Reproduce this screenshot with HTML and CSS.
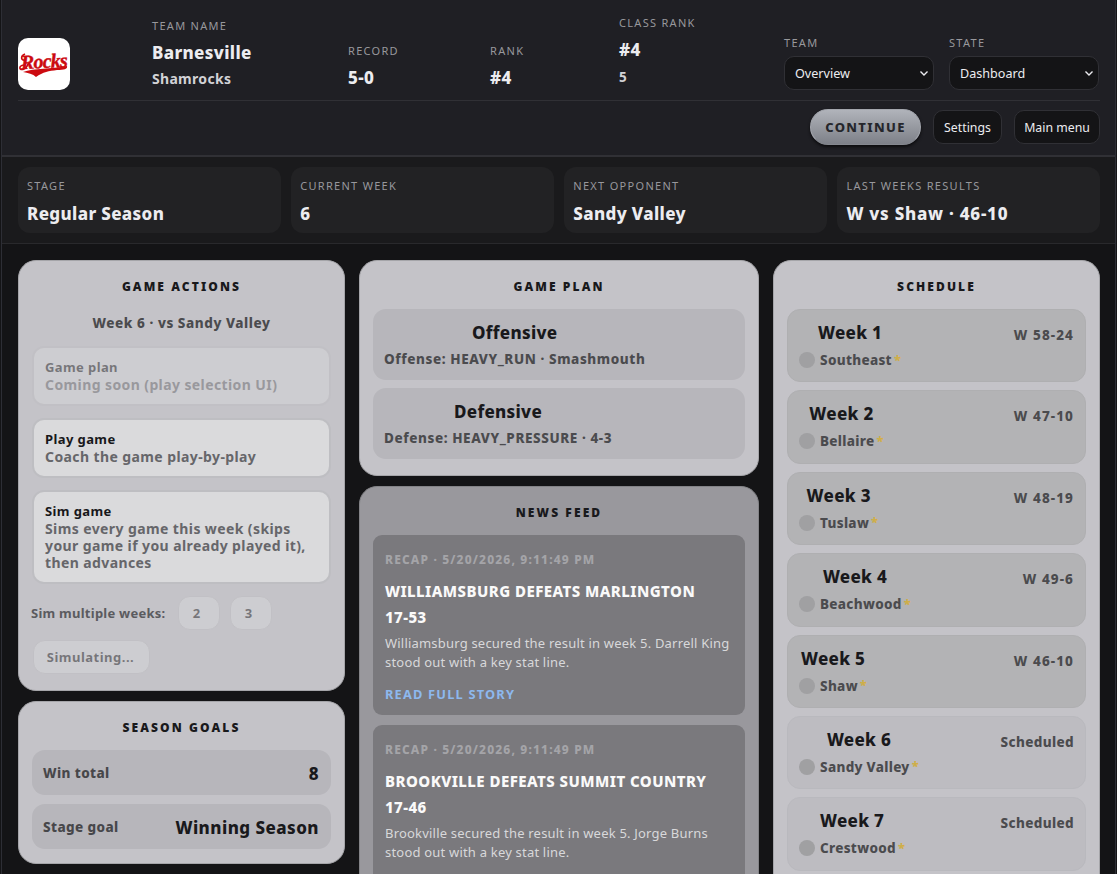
FILE: index.html
```
<!DOCTYPE html>
<html lang="en">
<head>
    <meta charset="UTF-8">
    <meta name="viewport" content="width=device-width, initial-scale=1.0">
    <title>Barnesville Shamrocks - Dashboard</title>
    <link rel="stylesheet" href="styles.css">
</head>
<body>
<div class="app">
    <header class="topbar">
        <div class="topbar-main">
            <div class="logo">
                <svg viewBox="0 0 52 52" width="52" height="52" role="img" aria-label="Rocks">
                    <text class="logo-text" x="3" y="30" transform="rotate(-3 26 26)">Rocks</text>
                    <path d="M5 34 C16 30 33 31 49 28 C50 31 46 32 39 32 C31 33 25 34 18 39 C15 36 10 35 5 34 Z" fill="#cc0a10"/>
                    <path d="M7 16 C2 18 3 23 7 22 M6 27 C0 28 1 33 6 31 C9 30 9 28 10 26" fill="none" stroke="#cc0a10" stroke-width="1.6"/>
                </svg>
            </div>
            <div class="stat">
                <div class="label">TEAM NAME</div>
                <div class="value">Barnesville</div>
                <div class="subvalue">Shamrocks</div>
            </div>
            <div class="stat">
                <div class="label">RECORD</div>
                <div class="value">5-0</div>
            </div>
            <div class="stat">
                <div class="label">RANK</div>
                <div class="value">#4</div>
            </div>
            <div class="stat stat-class">
                <div class="label">CLASS RANK</div>
                <div class="value">#4</div>
                <div class="subvalue">5</div>
            </div>
            <label class="picker">
                <span class="label">TEAM</span>
                <select><option>Overview</option></select>
            </label>
            <label class="picker">
                <span class="label">STATE</span>
                <select><option>Dashboard</option></select>
            </label>
        </div>
        <div class="topbar-actions">
            <button class="btn-continue">CONTINUE</button>
            <button class="btn-dark">Settings</button>
            <button class="btn-dark btn-menu">Main menu</button>
        </div>
    </header>

    <section class="summary">
        <div class="summary-card"><div class="label">STAGE</div><div class="value">Regular Season</div></div>
        <div class="summary-card"><div class="label">CURRENT WEEK</div><div class="value">6</div></div>
        <div class="summary-card"><div class="label">NEXT OPPONENT</div><div class="value">Sandy Valley</div></div>
        <div class="summary-card"><div class="label">LAST WEEKS RESULTS</div><div class="value value-score">W vs Shaw · 46-10</div></div>
    </section>

    <main class="board">
        <div class="column">
            <section class="card actions">
                <h2>GAME ACTIONS</h2>
                <p class="matchup">Week 6 · vs Sandy Valley</p>
                <button class="action" disabled><strong>Game plan</strong><span>Coming soon (play selection UI)</span></button>
                <button class="action"><strong>Play game</strong><span>Coach the game play-by-play</span></button>
                <button class="action"><strong>Sim game</strong><span>Sims every game this week (skips your game if you already played it), then advances</span></button>
                <div class="sim-row">
                    <span class="sim-label">Sim multiple weeks:</span>
                    <button class="pill" disabled>2</button>
                    <button class="pill" disabled>3</button>
                </div>
                <button class="pill pill-wide" disabled>Simulating...</button>
            </section>
            <section class="card goals">
                <h2>SEASON GOALS</h2>
                <div class="goal"><span>Win total</span><strong>8</strong></div>
                <div class="goal"><span>Stage goal</span><strong>Winning Season</strong></div>
            </section>
        </div>

        <div class="column">
            <section class="card plans">
                <h2>GAME PLAN</h2>
                <div class="plan">
                    <div class="plan-text"><h3>Offensive</h3><p>Offense: HEAVY_RUN · Smashmouth</p></div>
                </div>
                <div class="plan">
                    <div class="plan-text"><h3>Defensive</h3><p>Defense: HEAVY_PRESSURE · 4-3</p></div>
                </div>
            </section>
            <section class="card news">
                <h2>NEWS FEED</h2>
                <article class="story">
                    <div class="story-meta">RECAP · 5/20/2026, 9:11:49 PM</div>
                    <h3>WILLIAMSBURG DEFEATS MARLINGTON <span class="score">17-53</span></h3>
                    <p>Williamsburg secured the result in week 5. Darrell King stood out with a key stat line.</p>
                    <a class="story-link">READ FULL STORY</a>
                </article>
                <article class="story">
                    <div class="story-meta">RECAP · 5/20/2026, 9:11:49 PM</div>
                    <h3>BROOKVILLE DEFEATS SUMMIT COUNTRY <span class="score">17-46</span></h3>
                    <p>Brookville secured the result in week 5. Jorge Burns stood out with a key stat line.</p>
                </article>
            </section>
        </div>

        <div class="column">
            <section class="card schedule">
                <h2>SCHEDULE</h2>
                <div class="game played">
                    <div class="game-info"><h3>Week 1</h3><p><i class="dot"></i>Southeast<sup>*</sup></p></div>
                    <span class="result">W 58-24</span>
                </div>
                <div class="game played">
                    <div class="game-info"><h3>Week 2</h3><p><i class="dot"></i>Bellaire<sup>*</sup></p></div>
                    <span class="result">W 47-10</span>
                </div>
                <div class="game played">
                    <div class="game-info"><h3>Week 3</h3><p><i class="dot"></i>Tuslaw<sup>*</sup></p></div>
                    <span class="result">W 48-19</span>
                </div>
                <div class="game played">
                    <div class="game-info"><h3>Week 4</h3><p><i class="dot"></i>Beachwood<sup>*</sup></p></div>
                    <span class="result">W 49-6</span>
                </div>
                <div class="game played">
                    <div class="game-info"><h3>Week 5</h3><p><i class="dot"></i>Shaw<sup>*</sup></p></div>
                    <span class="result">W 46-10</span>
                </div>
                <div class="game">
                    <div class="game-info"><h3>Week 6</h3><p><i class="dot"></i>Sandy Valley<sup>*</sup></p></div>
                    <span class="result">Scheduled</span>
                </div>
                <div class="game">
                    <div class="game-info"><h3>Week 7</h3><p><i class="dot"></i>Crestwood<sup>*</sup></p></div>
                    <span class="result">Scheduled</span>
                </div>
            </section>
        </div>
    </main>
</div>
</body>
</html>
```
FILE: styles.css
```
* {
    box-sizing: border-box;
}

body {
    margin: 0;
    height: 874px;
    overflow: hidden;
    background: #141416;
    color: #ececf0;
    font-family: "Noto Sans", "Open Sans", sans-serif;
}

h2, h3, p {
    margin: 0;
}

button, select {
    font-family: inherit;
}

.app {
    height: 874px;
    margin: 0 1px;
    overflow: hidden;
    border-left: 1px solid #2d2e35;
    border-right: 1px solid #2d2e35;
}

/* Header */
.topbar {
    height: 157px;
    padding: 0 15px 0 16px;
    background: #1f1f24;
    border-bottom: 2px solid #303035;
}

.topbar-main {
    display: grid;
    grid-template-columns: 134px 196px 142px 129px 165px 165px 151px;
    align-items: end;
    height: 101px;
    padding-bottom: 9px;
    border-bottom: 1px solid #303035;
}

.logo {
    width: 52px;
    height: 52px;
    margin-bottom: 1px;
    border-radius: 10px;
    background: #fff;
}

.logo-text {
    fill: #cc0a10;
    stroke: #cc0a10;
    stroke-width: 0.4px;
    font: italic 700 20px "Liberation Serif", serif;
    letter-spacing: -0.8px;
}

.label {
    display: block;
    color: #98989c;
    font-size: 11px;
    line-height: 16px;
    letter-spacing: 1.3px;
}

.value {
    font-size: 17px;
    font-weight: 800;
    line-height: 26px;
    letter-spacing: 0.35px;
    margin-top: 6px;
}

.value-score {
    letter-spacing: 0.75px;
}

.subvalue {
    color: #d2d2d6;
    font-size: 14px;
    font-weight: 700;
    line-height: 25px;
    letter-spacing: 0.3px;
}

.stat-class .subvalue {
    font-size: 13.5px;
    line-height: 28px;
}

.picker {
    width: 150px;
}

.picker select {
    appearance: none;
    display: block;
    width: 150px;
    height: 34px;
    margin: 5px 0 1px;
    padding: 0 10px;
    border: 1px solid #303035;
    border-radius: 10px;
    background: #141416 url("data:image/svg+xml,%3Csvg xmlns='http://www.w3.org/2000/svg' width='10' height='8' fill='none' stroke='%23ececf0' stroke-width='1.4'%3E%3Cpath d='M1.5 2.5L5 6L8.5 2.5'/%3E%3C/svg%3E") no-repeat right 4px center;
    color: #ececf0;
    font-size: 12.6px;
}

.topbar-actions {
    display: flex;
    justify-content: flex-end;
    align-items: center;
    gap: 12px;
    height: 52px;
}

.btn-continue {
    width: 111px;
    height: 36px;
    padding: 0;
    border: 1px solid #a4a7ae;
    border-bottom-color: #85888f;
    border-radius: 18px;
    background: linear-gradient(#b0b3ba, #7d8088);
    box-shadow: 0 2px 3px #0c0c0e;
    color: #25262b;
    font-size: 13px;
    font-weight: 800;
    letter-spacing: 1.35px;
}

.btn-dark {
    width: 69px;
    height: 34px;
    padding: 0;
    border: 1px solid #303035;
    border-radius: 10px;
    background: #141416;
    color: #ececf0;
    font-size: 12.3px;
}

.btn-menu {
    width: 86px;
}

/* Summary strip */
.summary {
    display: grid;
    grid-template-columns: repeat(4, 1fr);
    gap: 10.6px;
    height: 87px;
    padding: 10px 15px 10px 16px;
    background: #1a1a1c;
    border-bottom: 1px solid #29292c;
}

.summary-card {
    height: 66px;
    padding: 11px 9px 0;
    border-radius: 12px;
    background: #222224;
}

.summary-card .value {
    margin-top: 7px;
}

/* Dashboard columns */
.board {
    display: grid;
    grid-template-columns: 327px 400px 327px;
    gap: 14px;
    padding: 16px 15px 0 16px;
}

.column {
    display: flex;
    flex-direction: column;
    gap: 10px;
}

.card {
    display: flex;
    flex-direction: column;
    padding: 17px 13px 15px;
    border: 1px solid #a5a5a9;
    border-radius: 18px;
    background: #c4c3c8;
    color: #19191c;
}

.card h2 {
    margin-bottom: 13px;
    font-size: 12px;
    font-weight: 900;
    line-height: 18px;
    letter-spacing: 2.1px;
    text-align: center;
}

.card h3 {
    font-size: 17px;
    font-weight: 800;
    line-height: 26px;
    letter-spacing: 0.3px;
}

.matchup {
    margin: 4px 0 13px;
    color: #4b4b4e;
    font-size: 13.5px;
    font-weight: 800;
    line-height: 20px;
    letter-spacing: 0.55px;
    text-align: center;
}

.actions {
    height: 431px;
}

.action {
    display: flex;
    flex-direction: column;
    margin-bottom: 12px;
    padding: 10px 10px 11px 11px;
    border: 2px solid #bebec2;
    border-radius: 12px;
    background: #dadadc;
    color: #17171a;
    font-size: 13px;
    line-height: 18px;
    letter-spacing: 0.4px;
    text-align: left;
}

.action span {
    color: #66666a;
    font-size: 14px;
    font-weight: 700;
    line-height: 17px;
}

.action:disabled,
.pill:disabled {
    opacity: 0.45;
}

.sim-row {
    display: flex;
    align-items: center;
    height: 34px;
    margin: 0 0 10px -1px;
}

.sim-label {
    width: 147px;
    color: #5b5b5f;
    font-size: 13px;
    font-weight: 700;
    letter-spacing: 0.25px;
    white-space: nowrap;
}

.pill {
    width: 42px;
    height: 34px;
    margin-right: 10px;
    padding: 0 5px 0 0;
    border: 1px solid #bebec2;
    border-radius: 12px;
    background: #dadadc;
    color: #17171a;
    font-size: 13px;
    font-weight: 700;
}

.pill-wide {
    width: 117px;
    margin-left: 1px;
    padding-right: 2px;
    letter-spacing: 0.5px;
}

.goals {
    padding-bottom: 14px;
}

.goal {
    display: flex;
    align-items: center;
    justify-content: space-between;
    height: 45px;
    margin-bottom: 9px;
    padding: 1px 12px 0 11px;
    border-radius: 13px;
    background: #b7b6bb;
}

.goal:last-child,
.plan:last-child {
    margin-bottom: 0;
}

.goal span {
    color: #47474a;
    font-size: 13.5px;
    font-weight: 800;
    letter-spacing: 0.4px;
}

.goal strong {
    font-size: 17px;
    font-weight: 800;
    letter-spacing: 0.45px;
}

/* Game plan */
.plans {
    padding-bottom: 16px;
}

.plan {
    display: flex;
    height: 71px;
    margin-bottom: 8px;
    padding: 11px 11px 8px;
    border-radius: 13px;
    background: #b7b6bb;
    text-align: center;
}

.plan p {
    color: #4b4b4e;
    font-size: 13.5px;
    font-weight: 800;
    line-height: 26px;
    letter-spacing: 0.58px;
}

/* News feed */
.news {
    background: #99989d;
    border-color: #838387;
}

.story {
    height: 180px;
    margin-bottom: 10.4px;
    padding: 16px 12px;
    border-radius: 9px;
    background: #7a797d;
}

.story-meta {
    color: #a4a4a8;
    font-size: 12px;
    font-weight: 800;
    line-height: 18px;
    letter-spacing: 1.15px;
}

.card .story h3 {
    margin-top: 8.5px;
    color: #fafafa;
    font-size: 15px;
    letter-spacing: 0.45px;
}

.score {
    white-space: nowrap;
}

.story p {
    margin-top: 4px;
    color: #d8d8da;
    font-size: 13px;
    line-height: 19px;
    letter-spacing: 0.2px;
}

.story-link {
    display: block;
    margin-top: 12px;
    color: #8db8ee;
    font-size: 12.8px;
    font-weight: 700;
    line-height: 20px;
    letter-spacing: 1.2px;
}

/* Schedule */
.game {
    display: flex;
    justify-content: space-between;
    height: 73.4px;
    margin-bottom: 8px;
    padding: 10px 11px;
    border: 1px solid #b9b9be;
    border-radius: 13px;
    background: #bdbcc1;
    text-align: center;
}

.game.played {
    border-color: #afafb1;
    background: #b3b3b5;
}

.game-info p {
    display: flex;
    align-items: center;
    height: 28px;
    color: #4b4b4e;
    font-size: 13.5px;
    font-weight: 800;
    letter-spacing: 0.3px;
}

.dot {
    width: 16px;
    height: 16px;
    margin-right: 5px;
    border-radius: 50%;
    background: #a0a0a2;
}

.game-info sup {
    margin: 0 0 1px 2px;
    color: #cfae48;
    font-size: 13px;
    line-height: 14px;
}

.result {
    margin-top: 5px;
    color: #4b4b4e;
    font-size: 13.5px;
    font-weight: 800;
    line-height: 20px;
    letter-spacing: 0.35px;
}

.played .result {
    letter-spacing: 1.1px;
}
```
